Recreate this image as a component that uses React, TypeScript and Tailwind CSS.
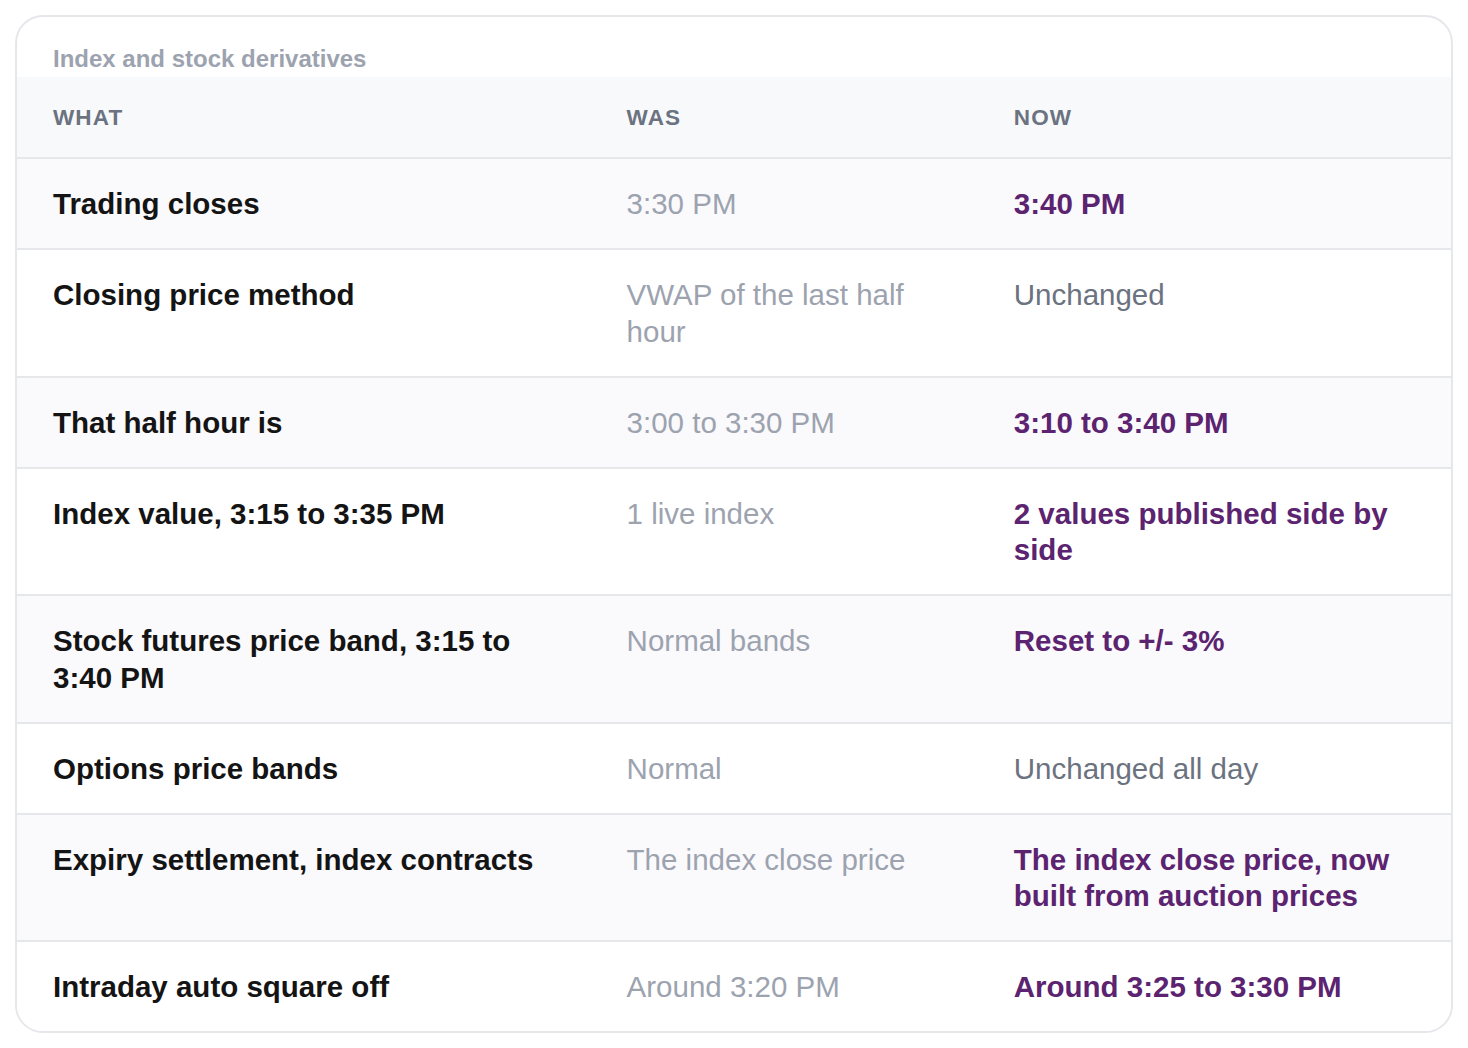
type Row = {
  what: string;
  was: string;
  now: string;
  changed: boolean;
};

const rows: Row[] = [
  { what: "Trading closes", was: "3:30 PM", now: "3:40 PM", changed: true },
  { what: "Closing price method", was: "VWAP of the last half hour", now: "Unchanged", changed: false },
  { what: "That half hour is", was: "3:00 to 3:30 PM", now: "3:10 to 3:40 PM", changed: true },
  { what: "Index value, 3:15 to 3:35 PM", was: "1 live index", now: "2 values published side by side", changed: true },
  { what: "Stock futures price band, 3:15 to 3:40 PM", was: "Normal bands", now: "Reset to +/- 3%", changed: true },
  { what: "Options price bands", was: "Normal", now: "Unchanged all day", changed: false },
  {
    what: "Expiry settlement, index contracts",
    was: "The index close price",
    now: "The index close price, now built from auction prices",
    changed: true,
  },
  { what: "Intraday auto square off", was: "Around 3:20 PM", now: "Around 3:25 to 3:30 PM", changed: true },
];

export default function App() {
  return (
    <div className="min-h-screen bg-white pt-[15px] font-['Liberation_Sans',Arial,sans-serif]">
      <div className="mx-[15px] overflow-hidden rounded-[28px] border-2 border-[#e5e7eb] bg-white">
        <p className="px-[36px] pt-[26px] pb-[2px] text-[24px] leading-[32px] font-bold text-[#9ca3af]">
          Index and stock derivatives
        </p>
        <table className="w-full table-fixed border-collapse">
          <colgroup>
            <col className="w-[40%]" />
            <col className="w-[27%]" />
            <col className="w-[33%]" />
          </colgroup>
          <thead>
            <tr className="border-b-2 border-[#e5e7eb] bg-[#f8f9fb]">
              {["What", "Was", "Now"].map((h) => (
                <th
                  key={h}
                  className="px-[36px] pt-[25px] pb-[24px] text-left text-[22.5px] leading-[31px] font-bold tracking-[0.05em] text-[#6b7280] uppercase"
                >
                  {h}
                </th>
              ))}
            </tr>
          </thead>
          <tbody>
            {rows.map((r, i) => (
              <tr
                key={r.what}
                className={`${i % 2 === 0 ? "bg-[#faf9fc]" : "bg-white"} ${
                  i < rows.length - 1 ? "border-b-2 border-[#e5e7eb]" : ""
                }`}
              >
                <td className="px-[36px] pt-[27px] pb-[25.5px] align-top text-[29.5px] leading-[36.5px] font-bold text-[#141414]">
                  {r.what}
                </td>
                <td className="px-[36px] pt-[27px] pb-[25.5px] align-top text-[29.5px] leading-[36.5px] text-[#9ca3af]">
                  {r.was}
                </td>
                <td
                  className={`px-[36px] pt-[27px] pb-[25.5px] align-top text-[29.5px] leading-[36.5px] ${
                    r.changed ? "font-bold text-[#5b2370]" : "text-[#6b7280]"
                  }`}
                >
                  {r.now}
                </td>
              </tr>
            ))}
          </tbody>
        </table>
      </div>
    </div>
  );
}
